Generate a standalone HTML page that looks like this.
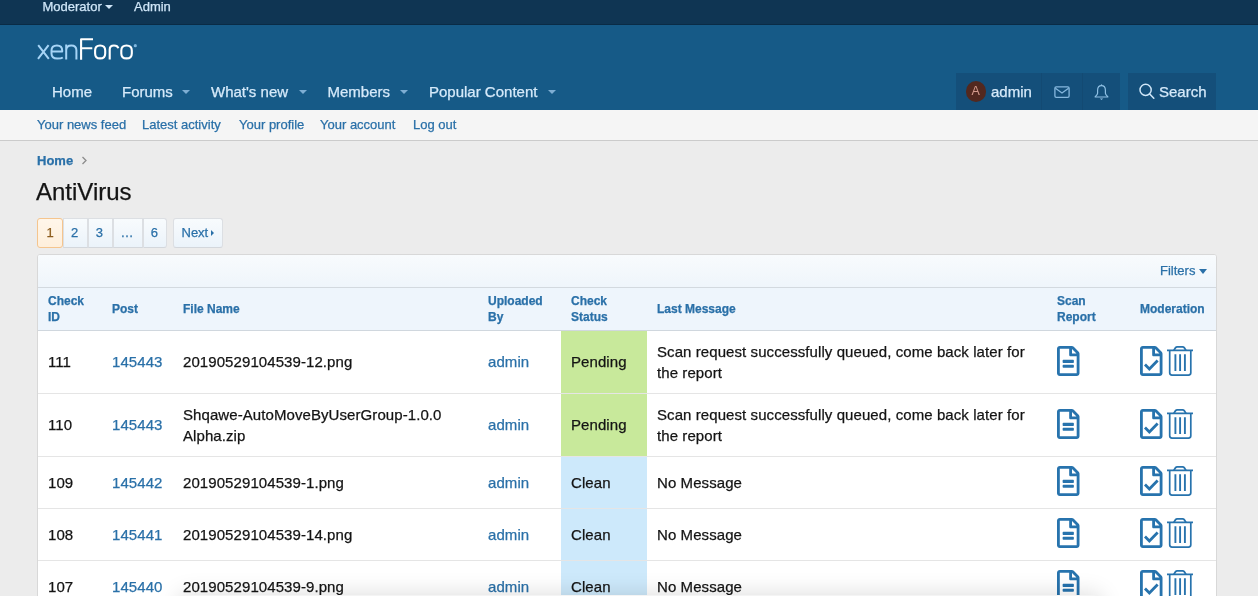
<!DOCTYPE html>
<html><head><meta charset="utf-8">
<style>
*{box-sizing:border-box}
html,body{margin:0;padding:0}
body{-webkit-text-stroke:0.25px currentColor;width:1258px;height:596px;overflow:hidden;background:#ececec;font-family:"Liberation Sans",sans-serif;color:#141414;position:relative}
#staff{position:absolute;left:0;top:0;width:1258px;height:25px;background:#0f3553;border-bottom:1px solid #0a2b45}
#staff span{position:absolute;top:-0.5px;font-size:13px;line-height:14px;color:#cfe6f8;white-space:nowrap}
#hdr{position:absolute;left:0;top:25px;width:1258px;height:85px;background:#165a87}
.nav{position:absolute;top:83px;font-size:15px;line-height:17px;color:#d6eafa;white-space:nowrap}
.caret{position:absolute;width:0;height:0;border-left:4.5px solid transparent;border-right:4.5px solid transparent;border-top:4.5px solid #7eaed3}
#subnav{position:absolute;left:0;top:110px;width:1258px;height:31px;background:#f5f5f5;border-bottom:1px solid #cbcbcb}
.sub{position:absolute;top:117px;font-size:13px;line-height:15px;color:#2a70a8;white-space:nowrap}
#acct{position:absolute;left:956px;top:73px;width:164px;height:37px;background:#144f7a}
#srch{position:absolute;left:1128px;top:73px;width:88px;height:37px;background:#144f7a}
.sep{position:absolute;top:0;width:1px;height:37px;background:#134a73}
#avatar{-webkit-text-stroke:0;position:absolute;left:9.5px;top:8px;width:20.5px;height:20.5px;border-radius:50%;background:#52281f;color:#d49a8c;font-size:12.5px;line-height:20.5px;text-align:center}
.htxt{position:absolute;font-size:15px;line-height:17px;color:#d6eafa;white-space:nowrap}
#crumb{position:absolute;left:37px;top:153px;font-size:13px;font-weight:bold;color:#2a70a8;line-height:15px}
#title{position:absolute;left:36px;top:178px;font-size:24px;line-height:28px;color:#141414;white-space:nowrap}
.pg{position:absolute;top:218px;height:29.5px;border:1px solid #dcdfe3;border-bottom-color:#d3d7dc;border-radius:3px;background:linear-gradient(#f8fbfd,#ebf3fa);color:#2a70a8;font-size:13px;line-height:27px;text-align:center}
.pg.cur{background:linear-gradient(#fff6ea,#feefdc);border-color:#f5c58e;color:#8c5d1e}
#block{position:absolute;left:37px;top:254px;width:1180px;height:400px;border:1px solid #d8d8d8;border-radius:3px;background:#fff;overflow:hidden}
#filters{position:absolute;left:0;top:0;width:1178px;height:33px;background:linear-gradient(#f8fbfd,#eff5fb);border-bottom:1px solid #d3d9df}
table{position:absolute;left:0;top:33px;border-collapse:collapse;table-layout:fixed;width:1178px}
th{background:#eef5fc;color:#2a70a8;font-size:12px;font-weight:bold;text-align:left;line-height:16px;padding:0 10px;height:42px;border-bottom:1px solid #d0d7de;vertical-align:middle}
td{font-size:15px;line-height:21px;letter-spacing:0.08px;padding:0 10px;border-bottom:1px solid #e5e5e5;vertical-align:middle}
td a{color:#2a70a8}
.pend{background:#c8e99b}
.clean{background:#cde9fb}
svg.ic{display:block}
</style></head><body><div style="position:absolute;left:0;top:0;width:1258px;height:596px;will-change:transform">
<div id="staff">
  <span style="left:42.5px">Moderator</span>
  <div class="caret" style="left:105px;top:5px;border-width:4px 4px 0 4px;border-top-color:#cfe6f8"></div>
  <span style="left:134px">Admin</span>
</div>
<div id="hdr"></div>
<svg style="position:absolute;left:0;top:0" width="150" height="70" viewBox="0 0 150 70">
 <g fill="none" stroke-width="2.0" stroke-linecap="butt" stroke-linejoin="round">
  <g stroke="#a6d4f6">
   <path d="M38.2 45.2 L48.8 58.8 M48.6 45.2 L38 58.8"/>
   <path d="M62.8 57.4 Q61.5 58.5 57.2 58.5 Q51.5 58.5 51.5 53.5 V50.4 Q51.5 45.4 56.9 45.4 Q62.2 45.4 62.2 50.4 V51.4 H51.5"/>
   <path d="M66.2 59.6 V44.6 M66.2 50.2 Q66.2 45.4 71.3 45.4 Q76.4 45.4 76.4 50.2 V59.6"/>
  </g>
  <g stroke="#ffffff" stroke-width="2.1">
   <path d="M81.1 59.7 V39.3 H93 M81.1 48.2 H92.3"/>
   <path d="M100.1 45.5 Q105.2 45.5 105.2 50.5 V53.4 Q105.2 58.4 100.1 58.4 Q95.1 58.4 95.1 53.4 V50.5 Q95.1 45.5 100.1 45.5 Z"/>
   <path d="M109.7 59.6 V49.5 Q109.7 45.5 114 45.5 Q117.6 45.5 118.3 48.2"/>
   <path d="M126.5 45.5 Q131.8 45.5 131.8 50.5 V53.4 Q131.8 58.4 126.5 58.4 Q121.3 58.4 121.3 53.4 V50.5 Q121.3 45.5 126.5 45.5 Z"/>
  </g>
 </g>
 <circle cx="135.3" cy="45.7" r="1.6" fill="#7fb6de"/>
</svg>
<div class="nav" style="left:52px">Home</div>
<div class="nav" style="left:122px">Forums</div>
<div class="caret" style="left:182px;top:90px"></div>
<div class="nav" style="left:211px">What's new</div>
<div class="caret" style="left:298.5px;top:90px"></div>
<div class="nav" style="left:327.5px">Members</div>
<div class="caret" style="left:399.5px;top:90px"></div>
<div class="nav" style="left:429px">Popular Content</div>
<div class="caret" style="left:547.5px;top:90px"></div>

<div id="acct">
  <div id="avatar">A</div>
  <div class="htxt" style="left:35px;top:10px">admin</div>
  <div class="sep" style="left:85px"></div>
  <svg style="position:absolute;left:98px;top:12.5px" width="16" height="12" viewBox="0 0 16 12"><rect x="0.9" y="0.9" width="14.2" height="10.4" rx="1.4" fill="none" stroke="#86b8de" stroke-width="1.3"/><path d="M1.4 2.2 L8 7 L14.6 2.2" fill="none" stroke="#86b8de" stroke-width="1.3"/></svg>
  <div class="sep" style="left:126px"></div>
  <svg style="position:absolute;left:137.5px;top:10.5px" width="15" height="17" viewBox="0 0 15 17"><path d="M7.5 1.6 C4.9 1.6 3.6 3.6 3.6 6.2 V9.2 C3.6 10.6 2.4 11.6 1.2 12.6 V13 H13.8 V12.6 C12.6 11.6 11.4 10.6 11.4 9.2 V6.2 C11.4 3.6 10.1 1.6 7.5 1.6 Z" fill="none" stroke="#8fc0e4" stroke-width="1.2" stroke-linejoin="round"/><path d="M5.8 14.6 H9.2 L7.5 16 Z" fill="#8fc0e4"/><path d="M7.5 0.4 V1.8" stroke="#8fc0e4" stroke-width="1.2"/></svg>
</div>
<div id="srch">
  <svg style="position:absolute;left:11px;top:10px" width="17" height="17" viewBox="0 0 17 17"><circle cx="6.6" cy="6.9" r="5.6" fill="none" stroke="#cfe6f8" stroke-width="1.45"/><path d="M10.7 11 L14.8 15.2" stroke="#cfe6f8" stroke-width="1.6" stroke-linecap="round"/></svg>
  <div class="htxt" style="left:31px;top:10px">Search</div>
</div>

<div id="subnav"></div>
<div class="sub" style="left:37px">Your news feed</div>
<div class="sub" style="left:142px">Latest activity</div>
<div class="sub" style="left:239px">Your profile</div>
<div class="sub" style="left:320px">Your account</div>
<div class="sub" style="left:413px">Log out</div>

<div id="crumb">Home</div>
<svg style="position:absolute;left:81px;top:156px" width="7" height="9" viewBox="0 0 7 9"><path d="M1.5 1 L5 4.5 L1.5 8" fill="none" stroke="#8c8c8c" stroke-width="1.3"/></svg>
<div id="title">AntiVirus</div>

<div class="pg cur" style="left:37px;width:26px">1</div>
<div class="pg" style="left:63px;width:24.5px;border-radius:0;padding-right:1.5px">2</div>
<div class="pg" style="left:87.5px;width:25px;border-radius:0;padding-right:1.5px">3</div>
<div class="pg" style="left:112.5px;width:30px;border-radius:0;padding-right:1px">…</div>
<div class="pg" style="left:142.5px;width:24.5px;border-radius:0 3px 3px 0;padding-right:1px">6</div>
<div class="pg" style="left:173px;width:49.5px;text-align:left;padding-left:7.5px">Next<span style="position:absolute;left:37px;top:10.5px;width:0;height:0;border-top:3px solid transparent;border-bottom:3px solid transparent;border-left:3.5px solid #2a70a8"></span></div>

<div id="block">
  <div id="filters"><div style="position:absolute;left:1122px;top:8px;font-size:13px;line-height:15px;color:#2a70a8">Filters</div><div style="position:absolute;left:1160.5px;top:13.5px;width:0;height:0;border-left:4.5px solid transparent;border-right:4.5px solid transparent;border-top:5px solid #2a70a8"></div></div>
  <table>
   <colgroup><col style="width:64px"><col style="width:71px"><col style="width:305px"><col style="width:83px"><col style="width:86px"><col style="width:400px"><col style="width:83px"><col style="width:86px"></colgroup>
   <tr><th>Check ID</th><th>Post</th><th>File Name</th><th>Uploaded By</th><th>Check Status</th><th>Last Message</th><th>Scan Report</th><th>Moderation</th></tr>
   <tr style="height:63px"><td>111</td><td><a>145443</a></td><td>20190529104539-12.png</td><td><a>admin</a></td><td class="pend">Pending</td><td>Scan request successfully queued, come back later for the report</td><td><svg class="ic" style="margin-left:0px;position:relative;top:-1px" width="22.5" height="30" viewBox="0 0 384 512"><path fill="#2773ad" d="M288 248v28c0 6.6-5.4 12-12 12H108c-6.6 0-12-5.4-12-12v-28c0-6.6 5.4-12 12-12h168c6.6 0 12 5.4 12 12zm-12 72H108c-6.6 0-12 5.4-12 12v28c0 6.6 5.4 12 12 12h168c6.6 0 12-5.4 12-12v-28c0-6.6-5.4-12-12-12zM384 131.9V464c0 26.5-21.5 48-48 48H48c-26.5 0-48-21.5-48-48V48C0 21.5 21.5 0 48 0h204.1C264.8 0 277 5.1 286 14.1L369.9 98c9 8.9 14.1 21.2 14.1 33.9zm-128-80V128h76.1L256 51.9zM336 464V176H232c-13.3 0-24-10.7-24-24V48H48v416h288z"/></svg></td><td><div style="white-space:nowrap;margin-left:0px;height:30px;position:relative;top:-1px"><svg width="22.5" height="30" viewBox="0 0 384 512" style="display:inline-block;vertical-align:top"><path fill="#2773ad" d="M384 131.9V464c0 26.5-21.5 48-48 48H48c-26.5 0-48-21.5-48-48V48C0 21.5 21.5 0 48 0h204.1C264.8 0 277 5.1 286 14.1L369.9 98c9 8.9 14.1 21.2 14.1 33.9zm-128-80V128h76.1L256 51.9zM336 464V176H232c-13.3 0-24-10.7-24-24V48H48v416h288z"/><path d="M85 316 L160 391 L301 249" fill="none" stroke="#2773ad" stroke-width="48" stroke-linecap="butt" stroke-linejoin="miter"/></svg><svg width="27" height="30" viewBox="0 0 27 30" style="display:inline-block;vertical-align:top;margin-left:4px"><g fill="none" stroke="#2773ad"><path d="M0 4.4 H26" stroke-width="1.8"/><path d="M6.8 4.4 L8.6 1.6 Q9.2 0.9 10.2 0.9 H15.6 Q16.6 0.9 17.2 1.6 L19 4.4" stroke-width="1.8"/><path d="M2.7 4.4 V26.8 Q2.7 29.1 5 29.1 H21.5 Q23.8 29.1 23.8 26.8 V4.4" stroke-width="1.7"/><path d="M8.4 8.2 V24.9 M13.1 8.2 V24.9 M17.9 8.2 V24.9" stroke-width="1.9"/></g></svg></div></td></tr>
   <tr style="height:63px"><td>110</td><td><a>145443</a></td><td>Shqawe-AutoMoveByUserGroup-1.0.0 Alpha.zip</td><td><a>admin</a></td><td class="pend">Pending</td><td>Scan request successfully queued, come back later for the report</td><td><svg class="ic" style="margin-left:0px;position:relative;top:-1px" width="22.5" height="30" viewBox="0 0 384 512"><path fill="#2773ad" d="M288 248v28c0 6.6-5.4 12-12 12H108c-6.6 0-12-5.4-12-12v-28c0-6.6 5.4-12 12-12h168c6.6 0 12 5.4 12 12zm-12 72H108c-6.6 0-12 5.4-12 12v28c0 6.6 5.4 12 12 12h168c6.6 0 12-5.4 12-12v-28c0-6.6-5.4-12-12-12zM384 131.9V464c0 26.5-21.5 48-48 48H48c-26.5 0-48-21.5-48-48V48C0 21.5 21.5 0 48 0h204.1C264.8 0 277 5.1 286 14.1L369.9 98c9 8.9 14.1 21.2 14.1 33.9zm-128-80V128h76.1L256 51.9zM336 464V176H232c-13.3 0-24-10.7-24-24V48H48v416h288z"/></svg></td><td><div style="white-space:nowrap;margin-left:0px;height:30px;position:relative;top:-1px"><svg width="22.5" height="30" viewBox="0 0 384 512" style="display:inline-block;vertical-align:top"><path fill="#2773ad" d="M384 131.9V464c0 26.5-21.5 48-48 48H48c-26.5 0-48-21.5-48-48V48C0 21.5 21.5 0 48 0h204.1C264.8 0 277 5.1 286 14.1L369.9 98c9 8.9 14.1 21.2 14.1 33.9zm-128-80V128h76.1L256 51.9zM336 464V176H232c-13.3 0-24-10.7-24-24V48H48v416h288z"/><path d="M85 316 L160 391 L301 249" fill="none" stroke="#2773ad" stroke-width="48" stroke-linecap="butt" stroke-linejoin="miter"/></svg><svg width="27" height="30" viewBox="0 0 27 30" style="display:inline-block;vertical-align:top;margin-left:4px"><g fill="none" stroke="#2773ad"><path d="M0 4.4 H26" stroke-width="1.8"/><path d="M6.8 4.4 L8.6 1.6 Q9.2 0.9 10.2 0.9 H15.6 Q16.6 0.9 17.2 1.6 L19 4.4" stroke-width="1.8"/><path d="M2.7 4.4 V26.8 Q2.7 29.1 5 29.1 H21.5 Q23.8 29.1 23.8 26.8 V4.4" stroke-width="1.7"/><path d="M8.4 8.2 V24.9 M13.1 8.2 V24.9 M17.9 8.2 V24.9" stroke-width="1.9"/></g></svg></div></td></tr>
   <tr style="height:52px"><td>109</td><td><a>145442</a></td><td>20190529104539-1.png</td><td><a>admin</a></td><td class="clean">Clean</td><td>No Message</td><td><svg class="ic" style="margin-left:0px;position:relative;top:-1px" width="22.5" height="30" viewBox="0 0 384 512"><path fill="#2773ad" d="M288 248v28c0 6.6-5.4 12-12 12H108c-6.6 0-12-5.4-12-12v-28c0-6.6 5.4-12 12-12h168c6.6 0 12 5.4 12 12zm-12 72H108c-6.6 0-12 5.4-12 12v28c0 6.6 5.4 12 12 12h168c6.6 0 12-5.4 12-12v-28c0-6.6-5.4-12-12-12zM384 131.9V464c0 26.5-21.5 48-48 48H48c-26.5 0-48-21.5-48-48V48C0 21.5 21.5 0 48 0h204.1C264.8 0 277 5.1 286 14.1L369.9 98c9 8.9 14.1 21.2 14.1 33.9zm-128-80V128h76.1L256 51.9zM336 464V176H232c-13.3 0-24-10.7-24-24V48H48v416h288z"/></svg></td><td><div style="white-space:nowrap;margin-left:0px;height:30px;position:relative;top:-1px"><svg width="22.5" height="30" viewBox="0 0 384 512" style="display:inline-block;vertical-align:top"><path fill="#2773ad" d="M384 131.9V464c0 26.5-21.5 48-48 48H48c-26.5 0-48-21.5-48-48V48C0 21.5 21.5 0 48 0h204.1C264.8 0 277 5.1 286 14.1L369.9 98c9 8.9 14.1 21.2 14.1 33.9zm-128-80V128h76.1L256 51.9zM336 464V176H232c-13.3 0-24-10.7-24-24V48H48v416h288z"/><path d="M85 316 L160 391 L301 249" fill="none" stroke="#2773ad" stroke-width="48" stroke-linecap="butt" stroke-linejoin="miter"/></svg><svg width="27" height="30" viewBox="0 0 27 30" style="display:inline-block;vertical-align:top;margin-left:4px"><g fill="none" stroke="#2773ad"><path d="M0 4.4 H26" stroke-width="1.8"/><path d="M6.8 4.4 L8.6 1.6 Q9.2 0.9 10.2 0.9 H15.6 Q16.6 0.9 17.2 1.6 L19 4.4" stroke-width="1.8"/><path d="M2.7 4.4 V26.8 Q2.7 29.1 5 29.1 H21.5 Q23.8 29.1 23.8 26.8 V4.4" stroke-width="1.7"/><path d="M8.4 8.2 V24.9 M13.1 8.2 V24.9 M17.9 8.2 V24.9" stroke-width="1.9"/></g></svg></div></td></tr>
   <tr style="height:52px"><td>108</td><td><a>145441</a></td><td>20190529104539-14.png</td><td><a>admin</a></td><td class="clean">Clean</td><td>No Message</td><td><svg class="ic" style="margin-left:0px;position:relative;top:-1px" width="22.5" height="30" viewBox="0 0 384 512"><path fill="#2773ad" d="M288 248v28c0 6.6-5.4 12-12 12H108c-6.6 0-12-5.4-12-12v-28c0-6.6 5.4-12 12-12h168c6.6 0 12 5.4 12 12zm-12 72H108c-6.6 0-12 5.4-12 12v28c0 6.6 5.4 12 12 12h168c6.6 0 12-5.4 12-12v-28c0-6.6-5.4-12-12-12zM384 131.9V464c0 26.5-21.5 48-48 48H48c-26.5 0-48-21.5-48-48V48C0 21.5 21.5 0 48 0h204.1C264.8 0 277 5.1 286 14.1L369.9 98c9 8.9 14.1 21.2 14.1 33.9zm-128-80V128h76.1L256 51.9zM336 464V176H232c-13.3 0-24-10.7-24-24V48H48v416h288z"/></svg></td><td><div style="white-space:nowrap;margin-left:0px;height:30px;position:relative;top:-1px"><svg width="22.5" height="30" viewBox="0 0 384 512" style="display:inline-block;vertical-align:top"><path fill="#2773ad" d="M384 131.9V464c0 26.5-21.5 48-48 48H48c-26.5 0-48-21.5-48-48V48C0 21.5 21.5 0 48 0h204.1C264.8 0 277 5.1 286 14.1L369.9 98c9 8.9 14.1 21.2 14.1 33.9zm-128-80V128h76.1L256 51.9zM336 464V176H232c-13.3 0-24-10.7-24-24V48H48v416h288z"/><path d="M85 316 L160 391 L301 249" fill="none" stroke="#2773ad" stroke-width="48" stroke-linecap="butt" stroke-linejoin="miter"/></svg><svg width="27" height="30" viewBox="0 0 27 30" style="display:inline-block;vertical-align:top;margin-left:4px"><g fill="none" stroke="#2773ad"><path d="M0 4.4 H26" stroke-width="1.8"/><path d="M6.8 4.4 L8.6 1.6 Q9.2 0.9 10.2 0.9 H15.6 Q16.6 0.9 17.2 1.6 L19 4.4" stroke-width="1.8"/><path d="M2.7 4.4 V26.8 Q2.7 29.1 5 29.1 H21.5 Q23.8 29.1 23.8 26.8 V4.4" stroke-width="1.7"/><path d="M8.4 8.2 V24.9 M13.1 8.2 V24.9 M17.9 8.2 V24.9" stroke-width="1.9"/></g></svg></div></td></tr>
   <tr style="height:52px"><td>107</td><td><a>145440</a></td><td>20190529104539-9.png</td><td><a>admin</a></td><td class="clean">Clean</td><td>No Message</td><td><svg class="ic" style="margin-left:0px;position:relative;top:-1px" width="22.5" height="30" viewBox="0 0 384 512"><path fill="#2773ad" d="M288 248v28c0 6.6-5.4 12-12 12H108c-6.6 0-12-5.4-12-12v-28c0-6.6 5.4-12 12-12h168c6.6 0 12 5.4 12 12zm-12 72H108c-6.6 0-12 5.4-12 12v28c0 6.6 5.4 12 12 12h168c6.6 0 12-5.4 12-12v-28c0-6.6-5.4-12-12-12zM384 131.9V464c0 26.5-21.5 48-48 48H48c-26.5 0-48-21.5-48-48V48C0 21.5 21.5 0 48 0h204.1C264.8 0 277 5.1 286 14.1L369.9 98c9 8.9 14.1 21.2 14.1 33.9zm-128-80V128h76.1L256 51.9zM336 464V176H232c-13.3 0-24-10.7-24-24V48H48v416h288z"/></svg></td><td><div style="white-space:nowrap;margin-left:0px;height:30px;position:relative;top:-1px"><svg width="22.5" height="30" viewBox="0 0 384 512" style="display:inline-block;vertical-align:top"><path fill="#2773ad" d="M384 131.9V464c0 26.5-21.5 48-48 48H48c-26.5 0-48-21.5-48-48V48C0 21.5 21.5 0 48 0h204.1C264.8 0 277 5.1 286 14.1L369.9 98c9 8.9 14.1 21.2 14.1 33.9zm-128-80V128h76.1L256 51.9zM336 464V176H232c-13.3 0-24-10.7-24-24V48H48v416h288z"/><path d="M85 316 L160 391 L301 249" fill="none" stroke="#2773ad" stroke-width="48" stroke-linecap="butt" stroke-linejoin="miter"/></svg><svg width="27" height="30" viewBox="0 0 27 30" style="display:inline-block;vertical-align:top;margin-left:4px"><g fill="none" stroke="#2773ad"><path d="M0 4.4 H26" stroke-width="1.8"/><path d="M6.8 4.4 L8.6 1.6 Q9.2 0.9 10.2 0.9 H15.6 Q16.6 0.9 17.2 1.6 L19 4.4" stroke-width="1.8"/><path d="M2.7 4.4 V26.8 Q2.7 29.1 5 29.1 H21.5 Q23.8 29.1 23.8 26.8 V4.4" stroke-width="1.7"/><path d="M8.4 8.2 V24.9 M13.1 8.2 V24.9 M17.9 8.2 V24.9" stroke-width="1.9"/></g></svg></div></td></tr>
  </table>
</div>
<div style="position:absolute;left:180px;top:595px;width:920px;height:40px;background:#f4f4f4;border-radius:6px;box-shadow:0 0 22px 2px rgba(0,0,0,0.13)"></div>
</div></body></html>
